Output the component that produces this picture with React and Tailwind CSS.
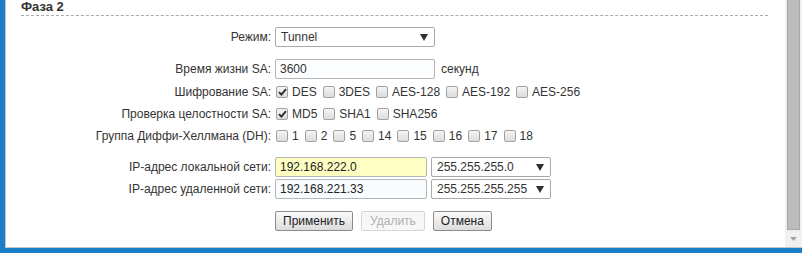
const font = { fontFamily: '"Liberation Sans", Arial, sans-serif' }

const Check = ({ checked, label }) => (
    <label className="flex items-center mr-[6px]">
        <span className="w-[12px] h-[12px] rounded-[2px] border border-[#a2a2a2] bg-gradient-to-b from-[#f4f4f4] to-[#dcdcdc] flex items-center justify-center">
            {checked && (
                <svg width="9" height="8" viewBox="0 0 9 8">
                    <path d="M1 4.2 L3.4 6.6 L8 1.2" fill="none" stroke="#2b2b2b" strokeWidth="1.8" />
                </svg>
            )}
        </span>
        <span className="ml-[4px]">{label}</span>
    </label>
)

const Select = ({ value, width }) => (
    <div className={`${width} h-[20px] border border-[#a9a9a9] rounded-[2px] bg-white flex items-center justify-between pl-[5px] pr-[6px]`}>
        <span>{value}</span>
        <svg width="8" height="7" viewBox="0 0 8 7">
            <path d="M0 0 H8 L4 7 Z" fill="#2d3238" />
        </svg>
    </div>
)

const Row = ({ label, children, h = 'h-[20px]' }) => (
    <div className={`flex items-center ${h}`}>
        <div className="w-[265px] text-right whitespace-nowrap">{label}</div>
        <div className="ml-[4px] flex items-center">{children}</div>
    </div>
)

export default function App() {
    return (
        <div className="w-[802px] h-[253px] bg-[#1a7fc8] flex text-[12px] text-[#333]" style={font}>
            <div className="ml-[5px] mb-[5px] flex-1 flex bg-white border-l border-b border-[#c4c4c4]">
                {/* content */}
                <div className="flex-1 flex flex-col">
                    <div className="ml-[15px] mr-[17px] border-b border-dashed border-[#aaaaaa] h-[16px] flex items-end">
                        <h2 className="text-[13px] font-bold text-[#333] leading-[15px] pb-[1px]">Фаза 2</h2>
                    </div>

                    <div className="mt-[11px] flex flex-col">
                        <Row label="Режим:">
                            <Select value="Tunnel" width="w-[160px]" />
                        </Row>

                        <div className="mt-[12px]">
                            <Row label="Время жизни SA:">
                                <input
                                    readOnly
                                    value="3600"
                                    className="w-[160px] h-[20px] border border-[#b5b5b5] rounded-[2px] bg-[#fbfdff] pl-[4px] outline-none text-[#333]"
                                />
                                <span className="ml-[6px]">секунд</span>
                            </Row>
                        </div>

                        <div className="mt-[2px]">
                            <Row label="Шифрование SA:" h="h-[22px]">
                                <span className="ml-[1px]" />
                                {['DES', '3DES', 'AES-128', 'AES-192', 'AES-256'].map((l, i) => (
                                    <Check key={l} label={l} checked={i === 0} />
                                ))}
                            </Row>
                            <Row label="Проверка целостности SA:" h="h-[22px]">
                                <span className="ml-[1px]" />
                                {['MD5', 'SHA1', 'SHA256'].map((l, i) => (
                                    <Check key={l} label={l} checked={i === 0} />
                                ))}
                            </Row>
                            <Row label="Группа Диффи-Хеллмана (DH):" h="h-[22px]">
                                <span className="ml-[1px]" />
                                {['1', '2', '5', '14', '15', '16', '17', '18'].map(l => (
                                    <Check key={l} label={l} />
                                ))}
                            </Row>
                        </div>

                        <div className="mt-[10px] flex flex-col gap-[2px]">
                            <Row label="IP-адрес локальной сети:">
                                <input
                                    readOnly
                                    value="192.168.222.0"
                                    className="w-[152px] h-[20px] border border-[#b5b5b5] rounded-[2px] bg-[#ffffc4] pl-[4px] outline-none text-[#222]"
                                />
                                <div className="ml-[4px]">
                                    <Select value="255.255.255.0" width="w-[120px]" />
                                </div>
                            </Row>
                            <Row label="IP-адрес удаленной сети:">
                                <input
                                    readOnly
                                    value="192.168.221.33"
                                    className="w-[152px] h-[20px] border border-[#b5b5b5] rounded-[2px] bg-[#f8fcfe] pl-[4px] outline-none text-[#222]"
                                />
                                <div className="ml-[4px]">
                                    <Select value="255.255.255.255" width="w-[120px]" />
                                </div>
                            </Row>
                        </div>

                        <div className="mt-[12px] flex pl-[269px] gap-[8px]">
                            <button className="h-[20px] px-[7px] border border-[#8c8c8c] rounded-[2px] bg-gradient-to-b from-[#fbfbfb] to-[#dcdcdc] text-[#222]">
                                Применить
                            </button>
                            <button disabled className="h-[20px] px-[8px] border border-[#d6d6d6] rounded-[2px] bg-[#f7f7f7] text-[#b0b0b0]">
                                Удалить
                            </button>
                            <button className="h-[20px] px-[7px] border border-[#8c8c8c] rounded-[2px] bg-gradient-to-b from-[#fbfbfb] to-[#dcdcdc] text-[#222]">
                                Отмена
                            </button>
                        </div>
                    </div>
                </div>

                {/* scrollbar */}
                <div className="w-[17px] bg-[#f0f0f0] flex flex-col items-center">
                    <div className="w-[13px] h-[230px] bg-[#bcbcbc] border-x border-b border-[#a8a8a8]" />
                    <div className="flex-1 flex items-center justify-center">
                        <svg width="7" height="4" viewBox="0 0 7 4">
                            <path d="M0 0 H7 L3.5 4 Z" fill="#a3a3a3" />
                        </svg>
                    </div>
                </div>
            </div>
        </div>
    )
}
